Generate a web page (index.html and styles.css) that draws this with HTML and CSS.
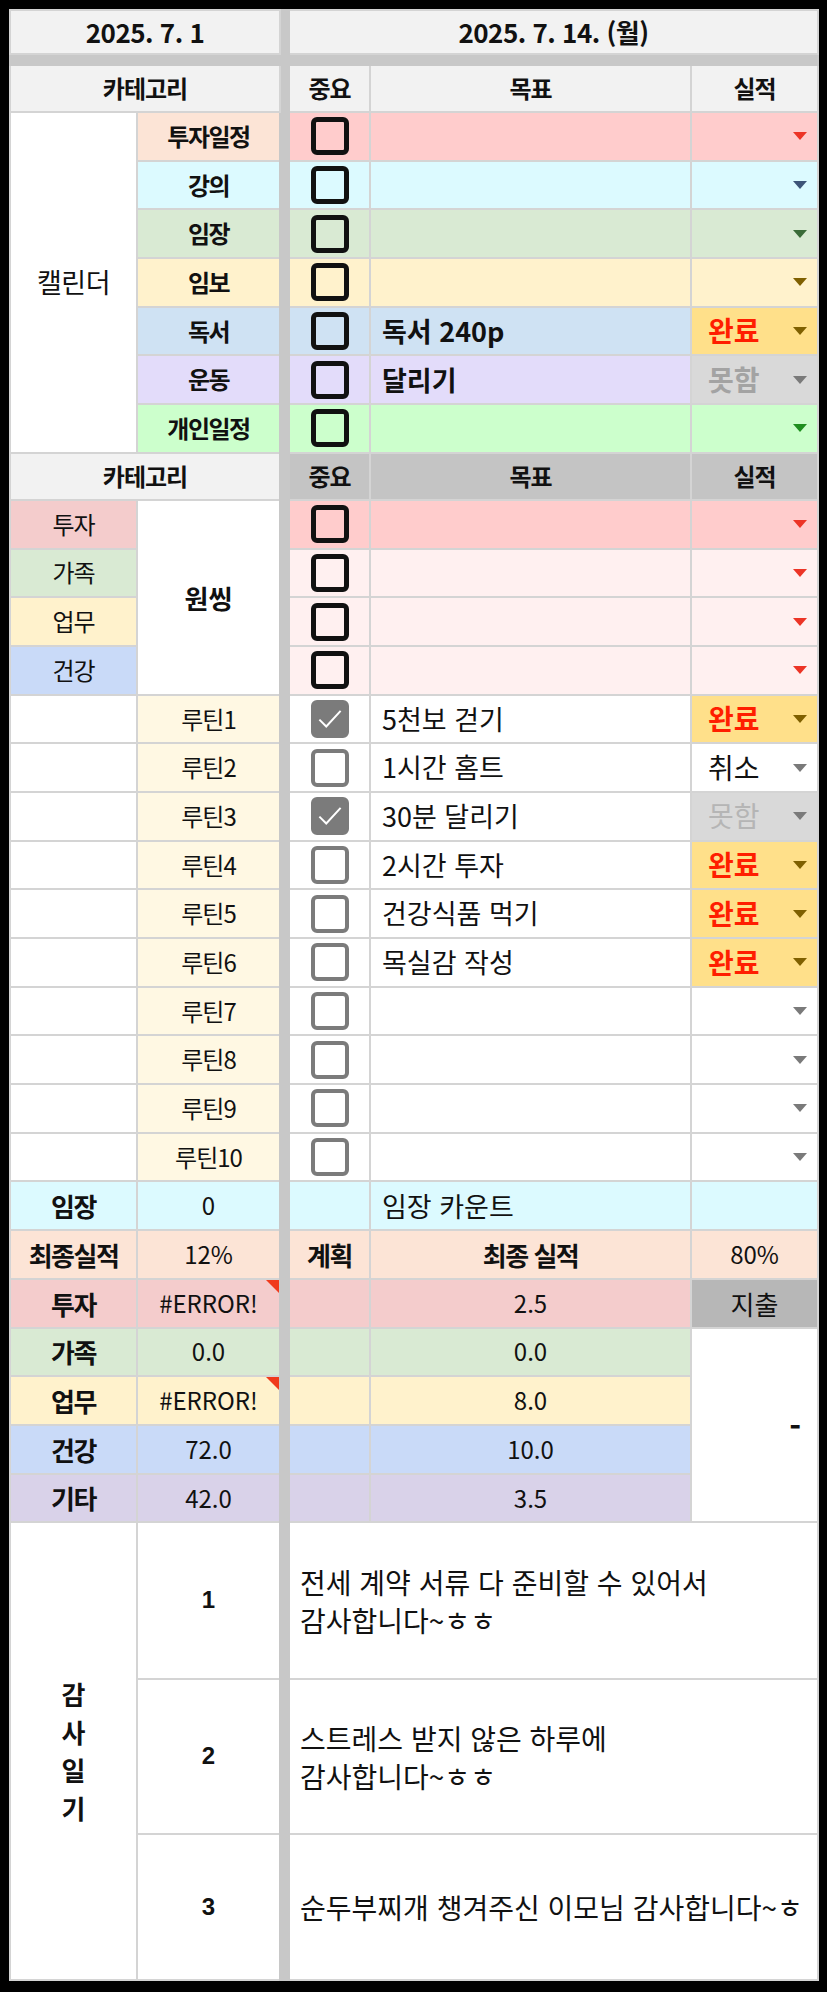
FILE: index.html
```html
<!DOCTYPE html>
<html lang="ko">
<head>
  <meta charset="UTF-8">
  <meta name="viewport" content="width=device-width, initial-scale=1.0">
  <link rel="stylesheet" href="styles.css">
  <title>Daily Sheet</title>
</head>
<body>
  <table class="sheet">
    <colgroup>
      <col class="col-a"><col class="col-b"><col class="col-gap"><col class="col-c"><col class="col-d"><col class="col-e">
    </colgroup>

    <!-- dates -->
    <tr class="h-date">
      <td colspan="2">2025. 7. 1</td>
      <td class="gap"></td>
      <td colspan="3">2025. 7. 14. (월)</td>
    </tr>
    <tr class="band"><td colspan="6"></td></tr>

    <!-- calendar -->
    <tr class="h-col">
      <td colspan="2">카테고리</td>
      <td class="gap" rowspan="33"></td>
      <td>중요</td><td>목표</td><td>실적</td>
    </tr>
    <tr class="row bg-red">
      <td class="cal-name" rowspan="7">캘린더</td>
      <td class="lab bg-peach">투자일정</td>
      <td><span class="cb"></span></td>
      <td class="goal"></td>
      <td><div class="sel"><span></span><i class="dd red"></i></div></td>
    </tr>
    <tr class="row bg-cyan">
      <td class="lab">강의</td>
      <td><span class="cb"></span></td>
      <td class="goal"></td>
      <td><div class="sel"><span></span><i class="dd navy"></i></div></td>
    </tr>
    <tr class="row bg-green">
      <td class="lab">임장</td>
      <td><span class="cb"></span></td>
      <td class="goal"></td>
      <td><div class="sel"><span></span><i class="dd forest"></i></div></td>
    </tr>
    <tr class="row bg-yellow">
      <td class="lab">임보</td>
      <td><span class="cb"></span></td>
      <td class="goal"></td>
      <td><div class="sel"><span></span><i class="dd olive"></i></div></td>
    </tr>
    <tr class="row bg-blue">
      <td class="lab">독서</td>
      <td><span class="cb"></span></td>
      <td class="goal strong">독서 240p</td>
      <td class="done"><div class="sel"><span>완료</span><i class="dd olive"></i></div></td>
    </tr>
    <tr class="row bg-lilac">
      <td class="lab">운동</td>
      <td><span class="cb"></span></td>
      <td class="goal strong">달리기</td>
      <td class="miss"><div class="sel"><span>못함</span><i class="dd gray"></i></div></td>
    </tr>
    <tr class="row bg-lime">
      <td class="lab">개인일정</td>
      <td><span class="cb"></span></td>
      <td class="goal"></td>
      <td><div class="sel"><span></span><i class="dd lime"></i></div></td>
    </tr>

    <!-- one thing -->
    <tr class="h-col dark">
      <td colspan="2">카테고리</td>
      <td>중요</td><td>목표</td><td>실적</td>
    </tr>
    <tr class="row bg-red">
      <td class="cat tint-rose">투자</td>
      <td class="one" rowspan="4">원씽</td>
      <td><span class="cb"></span></td>
      <td class="goal"></td>
      <td><div class="sel"><span></span><i class="dd red"></i></div></td>
    </tr>
    <tr class="row bg-blush">
      <td class="cat tint-green">가족</td>
      <td><span class="cb"></span></td>
      <td class="goal"></td>
      <td><div class="sel"><span></span><i class="dd red"></i></div></td>
    </tr>
    <tr class="row bg-blush">
      <td class="cat tint-yellow">업무</td>
      <td><span class="cb"></span></td>
      <td class="goal"></td>
      <td><div class="sel"><span></span><i class="dd red"></i></div></td>
    </tr>
    <tr class="row bg-blush">
      <td class="cat tint-sky">건강</td>
      <td><span class="cb"></span></td>
      <td class="goal"></td>
      <td><div class="sel"><span></span><i class="dd red"></i></div></td>
    </tr>

    <!-- routines -->
    <tr class="row routine">
      <td></td><td class="rt">루틴1</td>
      <td><span class="cb soft on"><svg viewBox="0 0 24 24"><path d="M3.5 12.5l5.5 5.5L20.5 5.5"/></svg></span></td>
      <td class="goal">5천보 걷기</td>
      <td class="done"><div class="sel"><span>완료</span><i class="dd olive"></i></div></td>
    </tr>
    <tr class="row routine">
      <td></td><td class="rt">루틴2</td>
      <td><span class="cb soft"></span></td>
      <td class="goal">1시간 홈트</td>
      <td><div class="sel"><span>취소</span><i class="dd gray"></i></div></td>
    </tr>
    <tr class="row routine">
      <td></td><td class="rt">루틴3</td>
      <td><span class="cb soft on"><svg viewBox="0 0 24 24"><path d="M3.5 12.5l5.5 5.5L20.5 5.5"/></svg></span></td>
      <td class="goal">30분 달리기</td>
      <td class="miss light"><div class="sel"><span>못함</span><i class="dd gray"></i></div></td>
    </tr>
    <tr class="row routine">
      <td></td><td class="rt">루틴4</td>
      <td><span class="cb soft"></span></td>
      <td class="goal">2시간 투자</td>
      <td class="done"><div class="sel"><span>완료</span><i class="dd olive"></i></div></td>
    </tr>
    <tr class="row routine">
      <td></td><td class="rt">루틴5</td>
      <td><span class="cb soft"></span></td>
      <td class="goal">건강식품 먹기</td>
      <td class="done"><div class="sel"><span>완료</span><i class="dd olive"></i></div></td>
    </tr>
    <tr class="row routine">
      <td></td><td class="rt">루틴6</td>
      <td><span class="cb soft"></span></td>
      <td class="goal">목실감 작성</td>
      <td class="done"><div class="sel"><span>완료</span><i class="dd olive"></i></div></td>
    </tr>
    <tr class="row routine">
      <td></td><td class="rt">루틴7</td>
      <td><span class="cb soft"></span></td>
      <td class="goal"></td>
      <td><div class="sel"><span></span><i class="dd gray"></i></div></td>
    </tr>
    <tr class="row routine">
      <td></td><td class="rt">루틴8</td>
      <td><span class="cb soft"></span></td>
      <td class="goal"></td>
      <td><div class="sel"><span></span><i class="dd gray"></i></div></td>
    </tr>
    <tr class="row routine">
      <td></td><td class="rt">루틴9</td>
      <td><span class="cb soft"></span></td>
      <td class="goal"></td>
      <td><div class="sel"><span></span><i class="dd gray"></i></div></td>
    </tr>
    <tr class="row routine">
      <td></td><td class="rt">루틴10</td>
      <td><span class="cb soft"></span></td>
      <td class="goal"></td>
      <td><div class="sel"><span></span><i class="dd gray"></i></div></td>
    </tr>

    <!-- summary -->
    <tr class="row bg-cyan sum">
      <td class="key">임장</td><td>0</td><td></td>
      <td class="goal">임장 카운트</td><td></td>
    </tr>
    <tr class="row bg-peach sum">
      <td class="key">최종실적</td><td>12%</td><td class="key">계획</td>
      <td class="key">최종 실적</td><td>80%</td>
    </tr>
    <tr class="row bg-rose sum">
      <td class="key">투자</td><td class="err">#ERROR!</td><td></td>
      <td>2.5</td><td class="spend">지출</td>
    </tr>
    <tr class="row bg-green sum">
      <td class="key">가족</td><td>0.0</td><td></td>
      <td>0.0</td><td class="dash" rowspan="4">-</td>
    </tr>
    <tr class="row bg-yellow sum">
      <td class="key">업무</td><td class="err">#ERROR!</td><td></td>
      <td>8.0</td>
    </tr>
    <tr class="row bg-sky sum">
      <td class="key">건강</td><td>72.0</td><td></td>
      <td>10.0</td>
    </tr>
    <tr class="row bg-mauve sum">
      <td class="key">기타</td><td>42.0</td><td></td>
      <td>3.5</td>
    </tr>

    <!-- gratitude journal -->
    <tr class="thx first">
      <td class="thx-title" rowspan="3">감<br>사<br>일<br>기</td>
      <td class="num">1</td>
      <td class="note" colspan="3">전세 계약 서류 다 준비할 수 있어서<br>감사합니다~ㅎㅎ</td>
    </tr>
    <tr class="thx second">
      <td class="num">2</td>
      <td class="note" colspan="3">스트레스 받지 않은 하루에<br>감사합니다~ㅎㅎ</td>
    </tr>
    <tr class="thx third">
      <td class="num">3</td>
      <td class="note" colspan="3">순두부찌개 챙겨주신 이모님 감사합니다~ㅎ</td>
    </tr>
  </table>
</body>
</html>
```

FILE: styles.css
```css
body {
  margin: 0;
  padding: 9px 10px 11px 9px;
  background-color: #000;
  font-family: 'Noto Sans CJK KR', 'Noto Sans', sans-serif;
  color: #111;
}

.sheet {
  width: 808px;
  table-layout: fixed;
  border-collapse: collapse;
  background-color: #fff;
}

.col-a { width: 127px; }
.col-b { width: 143px; }
.col-gap { width: 9px; }
.col-c { width: 81px; }
.col-d { width: 321px; }
.col-e { width: 127px; }

.sheet td {
  border: 2px solid #d4d4d4;
  padding: 0;
  text-align: center;
  vertical-align: middle;
  font-size: 24px;
  line-height: 1.2;
  white-space: nowrap;
}

.sheet td.gap {
  background-color: #c8c8c8;
  border-color: #c8c8c8;
}

/* headers */
.h-date { height: 44px; }
.h-date td {
  background-color: #f2f2f2;
  font-size: 26px;
  font-weight: bold;
  letter-spacing: -0.5px;
}

.band { height: 11px; }
.band td {
  background-color: #c8c8c8;
  border-color: #c8c8c8;
}

.h-col { height: 47px; }
.h-col td {
  background-color: #f2f2f2;
  font-weight: bold;
  letter-spacing: -1px;
}
.h-col.dark td { background-color: #c4c4c4; }
.h-col.dark td:first-child { background-color: #f2f2f2; }

.row { height: 48.7px; }

/* row colours */
.bg-red td { background-color: #ffcccc; }
.bg-cyan td { background-color: #dcfaff; }
.bg-green td { background-color: #d9ead3; }
.bg-yellow td { background-color: #fff2cc; }
.bg-blue td { background-color: #cfe2f3; }
.bg-lilac td { background-color: #e3dcfa; }
.bg-lime td { background-color: #ccffcc; }
.bg-blush td { background-color: #fff0f0; }
.bg-peach td { background-color: #fce4d6; }
.bg-rose td { background-color: #f4cccc; }
.bg-sky td { background-color: #c9daf8; }
.bg-mauve td { background-color: #d9d2e9; }

/* single cells tinted apart from their row */
.sheet td.bg-peach { background-color: #fce4d6; }
.sheet td.tint-rose { background-color: #f4cccc; }
.sheet td.tint-green { background-color: #d9ead3; }
.sheet td.tint-yellow { background-color: #fff2cc; }
.sheet td.tint-sky { background-color: #c9daf8; }

.sheet td.cal-name {
  background-color: #fff;
  font-size: 27px;
  letter-spacing: -0.5px;
}

.lab {
  font-size: 26px;
  font-weight: bold;
  letter-spacing: -1.5px;
}

.cat { letter-spacing: -1px; }

.sheet td.one {
  background-color: #fff;
  font-size: 26px;
  font-weight: bold;
}

.sheet td.goal {
  text-align: left;
  padding-left: 11px;
  font-size: 27px;
}
.goal.strong { font-weight: bold; }

/* checkbox */
.cb {
  display: inline-block;
  box-sizing: border-box;
  width: 38px;
  height: 38px;
  border: 5px solid #111;
  border-radius: 6px;
  vertical-align: middle;
}
.cb.soft {
  border: 4px solid #7b7b7b;
  background-color: #fff;
}
.cb.on { background-color: #7b7b7b; }
.cb svg {
  display: block;
  width: 100%;
  height: 100%;
  fill: none;
  stroke: #fff;
  stroke-width: 1.6;
}

/* status dropdown */
.sel {
  display: flex;
  align-items: center;
  justify-content: space-between;
  padding: 0 10px 0 16px;
  font-size: 28px;
}
.dd {
  width: 0;
  height: 0;
  border-left: 7px solid transparent;
  border-right: 7px solid transparent;
  border-top: 8px solid #808080;
}
.dd.red { border-top-color: #ec3426; }
.dd.navy { border-top-color: #3d5478; }
.dd.forest { border-top-color: #3a6b38; }
.dd.olive { border-top-color: #7f6000; }
.dd.gray { border-top-color: #7a7a7a; }
.dd.lime { border-top-color: #1f8f1f; }

.sheet td.done { background-color: #ffe08a; }
.done span {
  color: #ff1e00;
  font-weight: bold;
}
.sheet td.miss { background-color: #d9d9d9; }
.miss span {
  color: #a3a3a3;
  font-weight: bold;
}
.miss.light span {
  color: #b5b5b5;
  font-weight: normal;
}

/* routines */
.routine td { background-color: #fff; }
.sheet .routine td.rt {
  background-color: #fff8e3;
  letter-spacing: -1px;
}

/* summary */
.sheet td.key {
  font-size: 26px;
  font-weight: bold;
  letter-spacing: -1.5px;
}
.sheet td.err { position: relative; }
.err::after {
  content: '';
  position: absolute;
  top: 0;
  right: 0;
  border-top: 13px solid #f03a1c;
  border-left: 13px solid transparent;
}
.sheet td.spend {
  background-color: #b7b7b7;
  font-size: 26px;
}
.sheet td.dash {
  background-color: #fff;
  text-align: right;
  padding-right: 16px;
  font-weight: bold;
  font-size: 32px;
}

/* gratitude */
.thx td { background-color: #fff; }
.thx.first { height: 157px; }
.thx.second { height: 155px; }
.thx.third { height: 146px; }

.sheet td.thx-title {
  font-size: 26px;
  font-weight: bold;
  line-height: 38px;
}
.num {
  font-family: 'Liberation Sans', sans-serif;
  font-weight: bold;
}
.sheet td.note {
  text-align: left;
  padding-left: 10px;
  font-size: 28px;
  line-height: 38px;
}
```
